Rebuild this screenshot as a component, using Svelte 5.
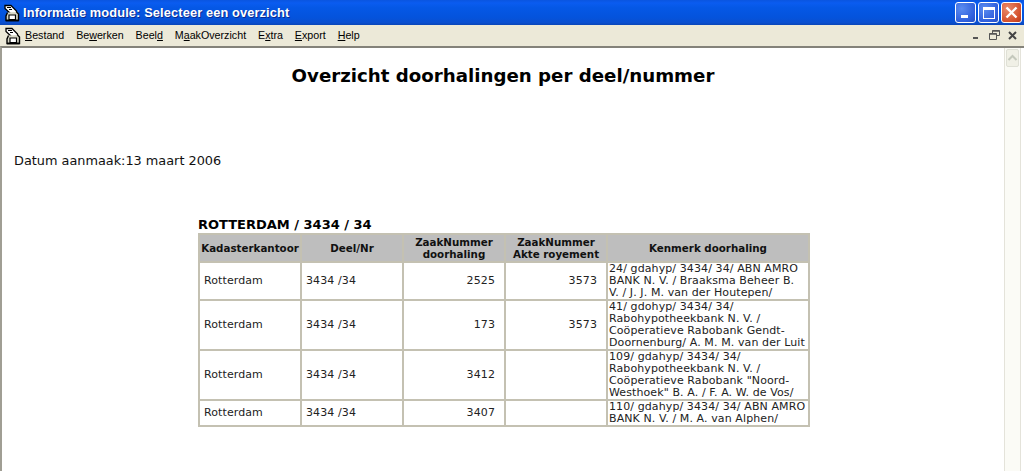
<script>
  const menu = [
    ['', 'B', 'estand'],
    ['Be', 'w', 'erken'],
    ['Beel', 'd', ''],
    ['M', 'a', 'akOverzicht'],
    ['E', 'x', 'tra'],
    ['', 'E', 'xport'],
    ['', 'H', 'elp']
  ];

  const rows = [
    { zaak: '2525', akte: '3573', kenmerk: '24/ gdahyp/ 3434/ 34/ ABN AMRO BANK N. V. / Braaksma Beheer B. V. / J. J. M. van der Houtepen/' },
    { zaak: '173', akte: '3573', kenmerk: '41/ gdohyp/ 3434/ 34/ Rabohypotheekbank N. V. / Coöperatieve Rabobank Gendt-Doornenburg/ A. M. M. van der Luit' },
    { zaak: '3412', akte: '', kenmerk: '109/ gdahyp/ 3434/ 34/ Rabohypotheekbank N. V. / Coöperatieve Rabobank "Noord-Westhoek" B. A. / F. A. W. de Vos/' },
    { zaak: '3407', akte: '', kenmerk: '110/ gdahyp/ 3434/ 34/ ABN AMRO BANK N. V. / M. A. van Alphen/' }
  ];
</script>

{#snippet appIcon()}
  <svg class="app-icon" width="18" height="18" viewBox="0 0 18 18">
    <path d="M2 1.5h6l5.5 5.5v3H8L2 4.5z" fill="#fff" stroke="#000" stroke-width="1.3"/>
    <path d="M4 3.5h4M6 5.5h3" stroke="#000" stroke-width="1"/>
    <path d="M4.5 8.5L3 12v4.5h12.5V10l-2-2" fill="#d8d8c8" stroke="#000" stroke-width="1.4"/>
    <path d="M6 11h6.5v4.5H6z" fill="#fff" stroke="#000" stroke-width="1.2"/>
    <path d="M3 16.5h12.5" stroke="#000" stroke-width="1.6"/>
  </svg>
{/snippet}

<div class="window">
  <header class="titlebar">
    {@render appIcon()}
    <span class="title">Informatie module: Selecteer een overzicht</span>
    <div class="caption">
      <button class="cap blue" aria-label="Minimaliseren"><span class="min-glyph"></span></button>
      <button class="cap blue" aria-label="Maximaliseren"><span class="max-glyph"></span></button>
      <button class="cap red" aria-label="Sluiten">
        <svg width="15" height="15" viewBox="0 0 15 15"><path d="M2.5 2.5l10 10M12.5 2.5l-10 10" stroke="#fff" stroke-width="2.4"/></svg>
      </button>
    </div>
  </header>

  <nav class="menubar">
    {@render appIcon()}
    <ul class="menu">
      {#each menu as m}
        <li>{m[0]}<u>{m[1]}</u>{m[2]}</li>
      {/each}
    </ul>
    <div class="mdi">
      <svg width="11" height="11" viewBox="0 0 11 11"><path d="M2 8h5" stroke="#555" stroke-width="2"/></svg>
      <svg width="11" height="11" viewBox="0 0 11 11" fill="none" stroke="#555"><path d="M3.5 3V.5h7v5H8"/><path d="M.5 3.5h7v6h-7z"/><path d="M.5 4h7M3.5 1h7" stroke-width="1.4"/></svg>
      <svg width="11" height="11" viewBox="0 0 11 11"><path d="M2 2l7 7M9 2l-7 7" stroke="#444" stroke-width="2"/></svg>
    </div>
  </nav>

  <div class="client">
    <main class="doc">
      <h1>Overzicht doorhalingen per deel/nummer</h1>
      <p class="datum">Datum aanmaak:13 maart 2006</p>
      <section class="report">
        <h2>ROTTERDAM / 3434 / 34</h2>
        <table>
          <colgroup>
            <col class="c1" /><col class="c2" /><col class="c3" /><col class="c4" /><col class="c5" />
          </colgroup>
          <thead>
            <tr>
              <th>Kadasterkantoor</th>
              <th>Deel/Nr</th>
              <th>ZaakNummer<br />doorhaling</th>
              <th>ZaakNummer<br />Akte royement</th>
              <th>Kenmerk doorhaling</th>
            </tr>
          </thead>
          <tbody>
            {#each rows as r}
              <tr>
                <td class="pad">Rotterdam</td>
                <td class="pad">3434 /34</td>
                <td class="num">{r.zaak}</td>
                <td class="num">{r.akte}</td>
                <td class="ken">{r.kenmerk}</td>
              </tr>
            {/each}
          </tbody>
        </table>
      </section>
    </main>
    <aside class="scrollbar">
      <div class="arrow">
        <svg width="11" height="8" viewBox="0 0 11 8"><path d="M1.5 6l4-4 4 4" fill="none" stroke="#c4c8bc" stroke-width="2"/></svg>
      </div>
    </aside>
  </div>
</div>

<style>
  :global(body) {
    margin: 0;
    background: #fff;
  }

  .window {
    width: 1024px;
    height: 471px;
    display: flex;
    flex-direction: column;
    overflow: hidden;
    font-family: "DejaVu Sans", Verdana, sans-serif;
  }

  .titlebar {
    height: 25px;
    flex-shrink: 0;
    display: flex;
    align-items: center;
    padding: 0 2px 0 3px;
    box-sizing: border-box;
    background: linear-gradient(to bottom, #0a55e0 0%, #0a5cf0 12%, #0558e6 30%, #0453dc 70%, #0a4fd0 90%, #0a46b8 100%);
  }

  .title {
    margin-left: 2px;
    color: #fff;
    font-family: "Liberation Sans", Arial, sans-serif;
    font-weight: 700;
    font-size: 12.8px;
    letter-spacing: 0.01em;
    text-shadow: 1px 1px 0 #0a2a90;
  }

  .caption {
    margin-left: auto;
    display: flex;
    gap: 2px;
  }

  .cap {
    width: 21px;
    height: 21px;
    padding: 0;
    border: 1px solid #fff;
    border-radius: 3px;
    display: flex;
    align-items: center;
    justify-content: center;
    position: relative;
  }

  .blue {
    background: radial-gradient(circle at 30% 30%, #5b8cf0, #2f5fdc 70%, #2450c4);
  }

  .red {
    background: radial-gradient(circle at 30% 30%, #e98a6c, #d4502c 70%, #b8381a);
  }

  .min-glyph {
    position: absolute;
    left: 5px;
    bottom: 4px;
    width: 7px;
    height: 3px;
    background: #fff;
  }

  .max-glyph {
    width: 10px;
    height: 8px;
    border: 1px solid #fff;
    border-top-width: 3px;
  }

  .menubar {
    height: 21px;
    flex-shrink: 0;
    display: flex;
    align-items: center;
    padding: 0 5px 0 4px;
    box-sizing: border-box;
    background: #ece9d8;
    color: #000;
    font-family: "Liberation Sans", Tahoma, sans-serif;
    font-size: 10.7px;
  }

  .menu {
    list-style: none;
    display: flex;
    gap: 11.9px;
    margin: 0 0 2px 3px;
    padding: 0;
  }

  .mdi {
    margin-left: auto;
    display: flex;
    gap: 7px;
    margin-right: 1px;
  }

  .client {
    flex: 1;
    min-height: 0;
    display: flex;
    background: #fff;
    border-top: 2px solid #84827a;
    border-left: 2px solid #a09e94;
  }

  .doc {
    flex: 1;
    min-width: 0;
    color: #000;
    padding: 0 0 0 12px;
  }

  h1 {
    margin: 16px 0 0;
    padding-right: 12px;
    text-align: center;
    font-size: 18.2px;
    line-height: 24px;
    font-weight: 700;
  }

  .datum {
    margin: 64px 0 0;
    font-size: 12.85px;
    line-height: 18px;
    color: #111;
  }

  .report {
    margin: 47px 0 0 184px;
  }

  h2 {
    margin: 0;
    font-size: 13px;
    line-height: 16px;
    font-weight: 700;
  }

  table {
    width: 612px;
    table-layout: fixed;
    border-collapse: collapse;
    border: 2px solid #c4c1b2;
    font-size: 11px;
    line-height: 12px;
    letter-spacing: 0.1px;
  }

  .c1, .c2, .c3, .c4 { width: 102px; }

  th, td {
    border: 2px solid #c4c1b2;
    padding: 0 1px;
    overflow: hidden;
  }

  th {
    height: 26px;
    background: #bebebe;
    font-weight: 700;
    text-align: center;
    white-space: nowrap;
    font-size: 10.3px;
    letter-spacing: 0;
    color: #111;
  }

  td {
    color: #222;
    background: #fff;
  }

  .pad {
    padding-left: 4px;
  }

  .num {
    text-align: right;
    padding-right: 9px;
  }

  .ken {
    padding: 0 2px 0 1px;
  }

  .scrollbar {
    width: 17px;
    margin-right: 3px;
    flex-shrink: 0;
    background: #fbfbf6;
    border-left: 1px solid #e4e3da;
    border-right: 1px solid #e4e3da;
    box-sizing: border-box;
  }

  .arrow {
    height: 16px;
    margin: 1px;
    display: flex;
    align-items: center;
    justify-content: center;
    background: #f0f0e6;
    border: 1px solid #dfe0d6;
    border-radius: 2px;
  }
</style>
